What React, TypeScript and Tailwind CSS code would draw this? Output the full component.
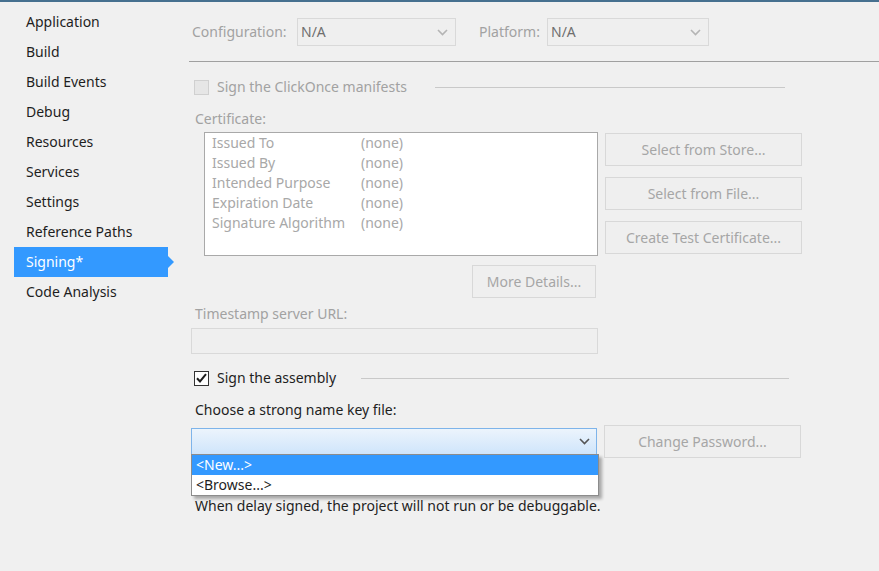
import { useState } from 'react';

const NAV = [
  'Application', 'Build', 'Build Events', 'Debug', 'Resources',
  'Services', 'Settings', 'Reference Paths', 'Signing*', 'Code Analysis',
];

const CERT_ROWS = [
  ['Issued To', '(none)'],
  ['Issued By', '(none)'],
  ['Intended Purpose', '(none)'],
  ['Expiration Date', '(none)'],
  ['Signature Algorithm', '(none)'],
];

function Chevron({ color }: { color: string }) {
  return (
    <svg width="11" height="7" viewBox="0 0 11 7" fill="none">
      <path d="M1 1l4.5 4.5L10 1" stroke={color} strokeWidth="1.6" />
    </svg>
  );
}

function Select({ value, width }: { value: string; width: string }) {
  return (
    <div className={`${width} h-[28px] flex items-center justify-between pl-[3px] pr-[7px] border border-[#d9d9d9] bg-[#efefef] text-[#6f6f6f]`}>
      <span>{value}</span>
      <Chevron color="#b4b4b4" />
    </div>
  );
}

function DisabledButton({ label, className = '' }: { label: string; className?: string }) {
  return (
    <div className={`h-[33px] flex items-center justify-center border border-[#d8d8d8] bg-[#efefef] text-[#a6a6a6] ${className}`}>
      {label}
    </div>
  );
}

export default function App() {
  const [active, setActive] = useState('Signing*');
  const [signAssembly, setSignAssembly] = useState(true);

  return (
    <div
      className="w-[879px] h-[571px] overflow-hidden bg-[#f0f0f0] text-[14px] leading-[20px] text-[#1e1e1e] border-t-2 border-[#46708f]"
      style={{ fontFamily: '"Noto Sans", "Open Sans", sans-serif' }}
    >
      <div className="flex">
        {/* Sidebar */}
        <div className="w-[189px] shrink-0 pl-[14px] pt-[5px]">
          {NAV.map(item => {
            const on = item === active;
            return (
              <div
                key={item}
                onClick={() => setActive(item)}
                className={`relative w-[154px] h-[30px] flex items-center pl-[12px] cursor-default ${on ? 'bg-[#3399ff] text-white' : ''}`}
              >
                {item}
                {on && (
                  <span className="absolute left-full top-1/2 -translate-y-1/2 w-0 h-0 border-y-[6px] border-y-transparent border-l-[6px] border-l-[#3399ff]" />
                )}
              </div>
            );
          })}
        </div>

        {/* Main */}
        <div className="flex-1 flex flex-col pt-[16px]">
          <div className="flex items-center pl-[3px]">
            <span className="w-[105px] text-[#a2a2a2]">Configuration:</span>
            <Select value="N/A" width="w-[159px]" />
            <span className="ml-[23px] w-[68px] text-[#a2a2a2]">Platform:</span>
            <Select value="N/A" width="w-[162px]" />
          </div>

          <div className="mt-[15px] border-t border-[#a0a0a0]" />

          {/* ClickOnce */}
          <div className="mt-[15px] h-[20px] flex items-center pl-[5px]">
            <span className="w-[15px] h-[15px] border border-[#d0d0d0] bg-[#e6e6e6]" />
            <span className="ml-[8px] text-[#a2a2a2]">Sign the ClickOnce manifests</span>
            <span className="ml-[28px] w-[350px] border-t border-[#c9c9c9]" />
          </div>

          <div className="mt-[12px] pl-[6px] text-[#a2a2a2]">Certificate:</div>

          <div className="mt-[3px] flex items-start pl-[15px]">
            <div className="w-[394px] h-[124px] border border-[#a9a9a9] bg-white pl-[7px] text-[#a8a8a8]">
              {CERT_ROWS.map(([k, v]) => (
                <div key={k} className="flex h-[20px] items-center">
                  <span className="w-[149px]">{k}</span>
                  <span>{v}</span>
                </div>
              ))}
            </div>
            <div className="ml-[7px] w-[197px] flex flex-col gap-[11px] pt-[1px]">
              <DisabledButton label="Select from Store..." />
              <DisabledButton label="Select from File..." />
              <DisabledButton label="Create Test Certificate..." />
            </div>
          </div>

          <DisabledButton label="More Details..." className="mt-[9px] ml-[283px] w-[124px]" />

          <div className="mt-[6px] pl-[6px] text-[#a2a2a2]">Timestamp server URL:</div>
          <div className="mt-[4px] ml-[2px] w-[407px] h-[26px] border border-[#d9d9d9] bg-[#efefef]" />

          {/* Strong name */}
          <div className="mt-[14px] h-[20px] flex items-center pl-[5px]">
            <button
              onClick={() => setSignAssembly(s => !s)}
              className="w-[15px] h-[15px] border border-[#333] bg-white flex items-center justify-center"
            >
              {signAssembly && (
                <svg width="11" height="10" viewBox="0 0 11 10" fill="none">
                  <path d="M1 5.2l3 3.2L10 1.2" stroke="#1e1e1e" strokeWidth="2" />
                </svg>
              )}
            </button>
            <span className="ml-[8px]">Sign the assembly</span>
            <span className="ml-[25px] w-[428px] border-t border-[#c9c9c9]" />
          </div>

          <div className="mt-[12px] pl-[6px]">Choose a strong name key file:</div>

          <div className="mt-[5px] flex items-center">
            <div className="relative ml-[2px] w-[406px] h-[27px] border border-[#7eb4ea] bg-gradient-to-b from-[#ecf4fc] to-[#cfe5fb] flex items-center justify-end pr-[6px]">
              <Chevron color="#555" />
              <div className="absolute left-[-1px] top-full w-[408px] border border-[#8c8c8c] bg-white shadow-[3px_3px_3px_rgba(0,0,0,0.3)]">
                <div className="h-[20px] flex items-center pl-[4px] bg-[#3399ff] text-white">&lt;New...&gt;</div>
                <div className="h-[20px] flex items-center pl-[4px] text-[#1e1e1e]">&lt;Browse...&gt;</div>
              </div>
            </div>
            <DisabledButton label="Change Password..." className="ml-[7px] w-[197px]" />
          </div>

          <div className="mt-[38px] pl-[6px]">When delay signed, the project will not run or be debuggable.</div>
        </div>
      </div>
    </div>
  );
}
